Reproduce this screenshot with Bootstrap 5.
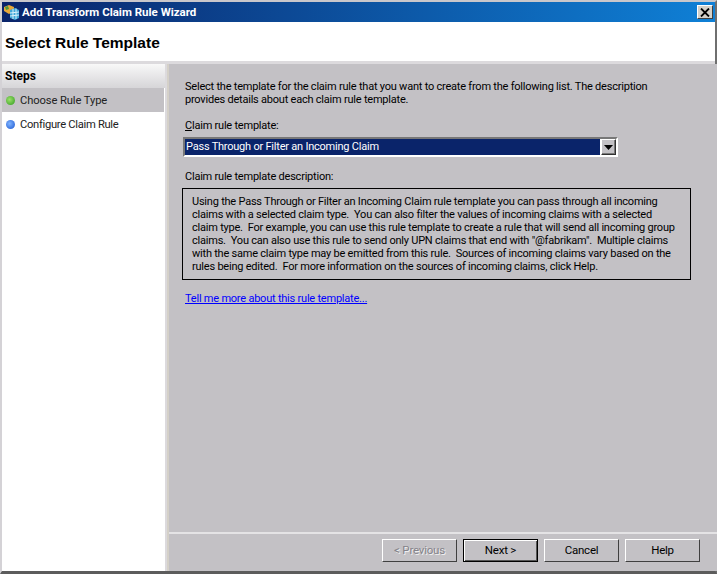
<!DOCTYPE html>
<html lang="en">
<head>
    <meta charset="UTF-8">
    <meta name="viewport" content="width=device-width, initial-scale=1.0">
    <title>Add Transform Claim Rule Wizard</title>
    <link href="https://cdn.jsdelivr.net/npm/bootstrap@5.3.0/dist/css/bootstrap.min.css" rel="stylesheet">
    <style>
        html, body {
            height: 100%;
            overflow: hidden;
        }
        body {
            background-color: #d4d0c8;
            font-family: Roboto, "Liberation Sans", Arial, sans-serif;
            font-size: 11px;
            line-height: 13px;
            letter-spacing: -0.22px;
            color: #000;
        }
        .wiz-window {
            height: 574px;
            border-top: 2px solid #c9c7cb;
            border-left: 2px solid #d4d2d6;
            border-right: 2px solid #6f6f6f;
            border-bottom: 3px solid #5c5c5c;
        }
        .wiz-title {
            height: 20px;
            padding: 0 2px 0 1px;
            gap: 2px;
            background: linear-gradient(90deg, #0a246a 0%, #0f80d6 100%);
            color: #fff;
            font-weight: 700;
            font-size: 11.5px;
            letter-spacing: 0;
            flex: none;
        }
        .wiz-close {
            width: 16px;
            height: 14px;
            padding: 0;
            background: #d4d0c8;
            border: 1px solid;
            border-color: #fff #404040 #404040 #fff;
            line-height: 0;
        }
        .wiz-head {
            height: 39px;
            padding: 2px 0 0 3px;
            background: #fff;
            font-family: "Liberation Sans", Arial, sans-serif;
            font-size: 15.5px;
            font-weight: 700;
            letter-spacing: 0;
            flex: none;
        }
        .wiz-rule {
            height: 3px;
            background: #dcdadd;
            flex: none;
        }
        .wiz-side {
            width: 165px;
            margin-right: 2px;
            background: #fff;
            border-right: 2px solid #dcdadd;
            flex: none;
        }
        .wiz-side-head {
            height: 24px;
            padding-left: 3px;
            background: linear-gradient(180deg, #f8f8f8 0%, #d6d5d8 100%);
            font-weight: 700;
            font-size: 12px;
            letter-spacing: 0;
        }
        .wiz-step {
            height: 24px;
            padding-left: 4px;
            gap: 5px;
            font-size: 11.2px;
            letter-spacing: -0.1px;
            color: #222;
        }
        .wiz-step-on {
            background: #c3c1c5;
            margin-right: 1px;
        }
        .wiz-step-tight {
            letter-spacing: -0.3px;
        }
        .wiz-dot {
            width: 9px;
            height: 9px;
            border-radius: 50%;
            flex: none;
        }
        .wiz-dot-green {
            background: radial-gradient(circle at 40% 40%, #9be06a, #2f9a1e);
        }
        .wiz-dot-blue {
            background: radial-gradient(circle at 40% 40%, #7fb4ff, #1a55d0);
        }
        .wiz-main {
            background: #c3c1c5;
        }
        .wiz-content {
            padding: 16px 26px 0 16px;
            white-space: nowrap;
        }
        .wiz-text {
            margin: 0;
        }
        .wiz-intro {
            margin-bottom: 13px;
        }
        .wiz-combo {
            width: 435px;
            height: 20px;
            margin: 5px 0 13px -2px;
            background: #fff;
            border: 2px solid;
            border-color: #777 #fff #fff #777;
        }
        .wiz-combo-val {
            background: #0a246a;
            color: #fff;
            padding-left: 1px;
            line-height: 16px;
        }
        .wiz-combo-btn {
            width: 15px;
            margin-left: 1px;
            padding: 0;
            background: #c3c1c5;
            border: 1px solid;
            border-color: #fff #303030 #303030 #fff;
            box-shadow: inset -1px -1px 0 #777;
        }
        .wiz-desc {
            width: 509px;
            height: 92px;
            margin: 5px 0 12px -3px;
            padding: 6px 0 0 9px;
            border: 1px solid #000;
        }
        .wiz-link {
            color: #0000ff;
        }
        .wiz-foot {
            height: 39px;
            padding: 5px 17px 0 0;
            gap: 6px;
            border-top: 2px solid #e4e3e5;
            flex: none;
        }
        .wiz-btn {
            width: 75px;
            height: 23px;
            padding: 0;
            font-size: 11.5px;
            line-height: 1;
            letter-spacing: -0.22px;
            border-radius: 0;
            color: #000;
            background: #c3c1c5;
            border: 1px solid;
            border-color: #fff #404040 #404040 #fff;
        }
        .wiz-btn-def {
            border-color: #000;
            box-shadow: inset 1px 1px 0 #fff, inset -1px -1px 0 #555;
        }
        .wiz-btn.disabled, .wiz-btn:disabled {
            color: #85838a;
            text-shadow: 1px 1px 0 #f0f0f0;
            background: #c3c1c5;
            border-color: #fff #404040 #404040 #fff;
            opacity: 1;
        }
    </style>
</head>
<body>

<div class="wiz-window d-flex flex-column">
    <div class="wiz-title d-flex align-items-center">
        <svg width="17" height="17" viewBox="0 0 17 17" class="flex-shrink-0">
            <path d="M1 3l5-2 5 2v4l-5 3-5-3z" fill="#e8a83a"/>
            <path d="M2 3l3-1 1 3-3 1z" fill="#4f9a3a"/>
            <path d="M7 6l5-2 4 2v8l-4 2-5-2z" fill="#3fa6d8"/>
            <path d="M7 9l9-1M7 12l9-1M10 5v10M13 4.500V15" stroke="#d6f0fa" fill="none"/>
        </svg>
        <span class="flex-grow-1">Add Transform Claim Rule Wizard</span>
        <button type="button" class="wiz-close d-flex align-items-center justify-content-center">
            <svg width="10" height="9" viewBox="0 0 10 9">
                <path d="M1 0.5l8 8M9 0.5l-8 8" stroke="#000" stroke-width="1.8" fill="none"/>
            </svg>
        </button>
    </div>
    <div class="wiz-head d-flex align-items-center">Select Rule Template</div>
    <div class="wiz-rule"></div>
    <div class="d-flex flex-grow-1">
        <div class="wiz-side">
            <div class="wiz-side-head d-flex align-items-center">Steps</div>
            <div class="wiz-step wiz-step-on d-flex align-items-center">
                <span class="wiz-dot wiz-dot-green"></span>Choose Rule Type
            </div>
            <div class="wiz-step wiz-step-tight d-flex align-items-center">
                <span class="wiz-dot wiz-dot-blue"></span>Configure Claim Rule
            </div>
        </div>
        <div class="wiz-main flex-grow-1 d-flex flex-column">
            <div class="wiz-content flex-grow-1">
                <p class="wiz-text wiz-intro">Select the template for the claim rule that you want to create from the following list. The description<br>provides details about each claim rule template.</p>
                <p class="wiz-text"><u>C</u>laim rule template:</p>
                <div class="wiz-combo d-flex">
                    <div class="wiz-combo-val flex-grow-1">Pass Through or Filter an Incoming Claim</div>
                    <button type="button" class="wiz-combo-btn d-flex align-items-center justify-content-center">
                        <svg width="9" height="5" viewBox="0 0 9 5"><path d="M0 0h9L4.500 5z" fill="#000"/></svg>
                    </button>
                </div>
                <p class="wiz-text">Claim rule template description:</p>
                <div class="wiz-desc">
                    Using the Pass Through or Filter an Incoming Claim rule template you can pass through all incoming<br>
                    claims with a selected claim type.&nbsp; You can also filter the values of incoming claims with a selected<br>
                    claim type.&nbsp; For example, you can use this rule template to create a rule that will send all incoming group<br>
                    claims.&nbsp; You can also use this rule to send only UPN claims that end with "@fabrikam".&nbsp; Multiple claims<br>
                    with the same claim type may be emitted from this rule.&nbsp; Sources of incoming claims vary based on the<br>
                    rules being edited.&nbsp; For more information on the sources of incoming claims, click Help.
                </div>
                <a href="#" class="wiz-link">Tell me more about this rule template...</a>
            </div>
            <div class="wiz-foot d-flex justify-content-end">
                <button type="button" class="btn wiz-btn" disabled>&lt; Previous</button>
                <button type="button" class="btn wiz-btn wiz-btn-def">Next &gt;</button>
                <button type="button" class="btn wiz-btn">Cancel</button>
                <button type="button" class="btn wiz-btn">Help</button>
            </div>
        </div>
    </div>
</div>

<script src="https://cdn.jsdelivr.net/npm/bootstrap@5.3.0/dist/js/bootstrap.bundle.min.js"></script>
</body>
</html>
